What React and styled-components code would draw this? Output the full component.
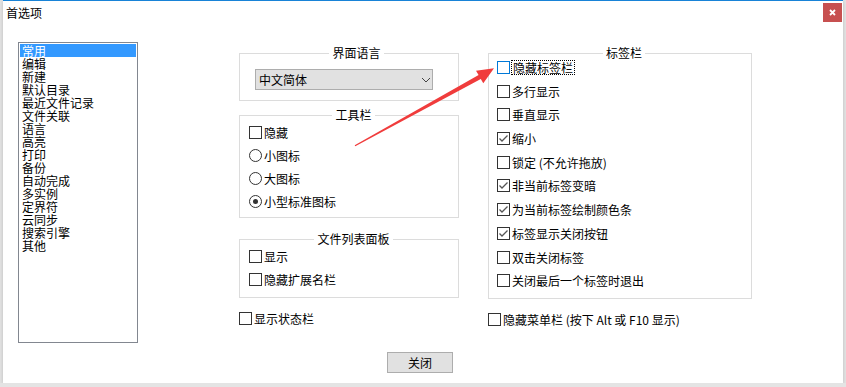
import React from 'react';
import styled, {createGlobalStyle} from 'styled-components';

const GlobalStyle = createGlobalStyle`
  body {
    margin: 0;
    background: #e4e4e4;
    font-family: "Noto Sans CJK SC", "Microsoft YaHei", sans-serif;
    font-size: 12px;
    color: #000;
  }
`;

const Window = styled.div`
  position: relative;
  box-sizing: border-box;
  width: 840px;
  height: 383px;
  margin-left: 3px;
  background: #fff;
  border-top: 1px solid #1883d7;
  box-shadow: 0 1px 4px rgba(0, 0, 0, 0.18);
`;

const TitleBar = styled.div`
  height: 41px;
  display: flex;
  justify-content: space-between;
  align-items: flex-start;
`;

const Title = styled.div`
  padding: 5px 0 0 3px;
  font-size: 12px;
  line-height: 14px;
`;

const CloseButton = styled.div`
  width: 19px;
  height: 19px;
  margin: 2px 1px 0 0;
  background: #c75050;
  display: flex;
  align-items: center;
  justify-content: center;
`;

const Main = styled.div`
  display: flex;
  align-items: flex-start;
  padding-left: 15px;
`;

const CategoryList = styled.div`
  box-sizing: border-box;
  width: 120px;
  height: 301px;
  border: 1px solid #828790;
  padding: 1px;
  display: flex;
  flex-direction: column;
`;

const CategoryItem = styled.div`
  height: 13px;
  line-height: 13px;
  padding-left: 2px;
  white-space: nowrap;
  background: ${p => (p.$selected ? '#3399ff' : 'transparent')};
  color: ${p => (p.$selected ? '#fff' : '#000')};
`;

const Column = styled.div`
  width: ${p => p.$width}px;
  margin-left: ${p => p.$ml}px;
  display: flex;
  flex-direction: column;
`;

const Group = styled.fieldset`
  box-sizing: border-box;
  min-width: 0;
  width: 100%;
  margin: ${p => p.$mt || 0}px 0 0 0;
  border: 1px solid #dcdcdc;
  padding: ${p => p.$pt}px 0 ${p => p.$pb}px ${p => p.$pl}px;
  display: flex;
  flex-direction: column;
  gap: ${p => p.$gap || 0}px;
`;

const Legend = styled.legend`
  margin: 0 auto;
  padding: 0 3px;
  font-size: 12px;
  line-height: 14px;
  height: 14px;
`;

const Select = styled.div`
  box-sizing: border-box;
  width: 178px;
  height: 21px;
  background: #e1e1e1;
  border: 1px solid #adadad;
  padding: 0 1px 0 3px;
  display: flex;
  align-items: center;
  justify-content: space-between;
`;

const OptionRow = styled.div`
  height: 13px;
  display: flex;
  align-items: center;
  gap: 2px;
  margin-top: ${p => p.$mt || 0}px;
`;

const Box = styled.span`
  box-sizing: border-box;
  flex: none;
  width: 13px;
  height: 13px;
  background: #fff;
  border: 1px solid ${p => (p.$focused ? '#0078d7' : '#333')};
  border-radius: ${p => (p.$round ? '50%' : '0')};
  display: flex;
  align-items: center;
  justify-content: center;
`;

const Dot = styled.span`
  width: 5px;
  height: 5px;
  border-radius: 50%;
  background: #333;
`;

const Label = styled.span`
  line-height: 13px;
  white-space: nowrap;
  outline: ${p => (p.$focused ? '1px dotted #000' : 'none')};
  outline-offset: 0;
  padding: ${p => (p.$focused ? '0 1px' : '0')};
`;

const Footer = styled.div`
  display: flex;
  justify-content: center;
  padding-right: 6px;
  margin-top: 9px;
`;

const Button = styled.div`
  box-sizing: border-box;
  width: 66px;
  height: 21px;
  background: #e1e1e1;
  border: 1px solid #adadad;
  display: flex;
  align-items: center;
  justify-content: center;
  line-height: 14px;
`;

const Overlay = styled.svg`
  position: absolute;
  left: 0;
  top: -1px;
  pointer-events: none;
`;

const Check = ({checked, focused, label, mt}) => (
    <OptionRow $mt={mt}>
        <Box $focused={focused}>
            {checked && (
                <svg width="11" height="11" viewBox="0 0 11 11">
                    <polyline points="1.5,5.5 4,8 9.5,2.5" fill="none" stroke="#555" strokeWidth="1.3"/>
                </svg>
            )}
        </Box>
        <Label $focused={focused}>{label}</Label>
    </OptionRow>
);

const Radio = ({checked, label}) => (
    <OptionRow>
        <Box $round>{checked && <Dot/>}</Box>
        <Label>{label}</Label>
    </OptionRow>
);

const categories = ['常用', '编辑', '新建', '默认目录', '最近文件记录', '文件关联', '语言', '高亮', '打印',
    '备份', '自动完成', '多实例', '定界符', '云同步', '搜索引擎', '其他'];

const tabOptions = [
    ['隐藏标签栏', false, true],
    ['多行显示', false],
    ['垂直显示', false],
    ['缩小', true],
    ['锁定 (不允许拖放)', false],
    ['非当前标签变暗', true],
    ['为当前标签绘制颜色条', true],
    ['标签显示关闭按钮', true],
    ['双击关闭标签', false],
    ['关闭最后一个标签时退出', false],
];

export default function App() {
    return (
        <>
            <GlobalStyle/>
            <Window>
                <TitleBar>
                    <Title>首选项</Title>
                    <CloseButton>
                        <svg width="19" height="19" viewBox="0 0 19 19">
                            <path d="M7 7 L12 12 M12 7 L7 12" stroke="#fff" strokeWidth="1.8"/>
                        </svg>
                    </CloseButton>
                </TitleBar>
                <Main>
                    <CategoryList>
                        {categories.map((c, i) => (
                            <CategoryItem key={c} $selected={i === 0}>{c}</CategoryItem>
                        ))}
                    </CategoryList>
                    <Column $width={220} $ml={101}>
                        <Group $mt={4} $pt={9} $pb={10} $pl={15}>
                            <Legend>界面语言</Legend>
                            <Select>
                                <span>中文简体</span>
                                <svg width="10" height="10" viewBox="0 0 10 10">
                                    <polyline points="1,3 5,7 9,3" fill="none" stroke="#444" strokeWidth="1"/>
                                </svg>
                            </Select>
                        </Group>
                        <Group $mt={7} $pt={4} $pb={9} $pl={9} $gap={10}>
                            <Legend>工具栏</Legend>
                            <Check label="隐藏"/>
                            <Radio label="小图标"/>
                            <Radio label="大图标"/>
                            <Radio label="小型标准图标" checked/>
                        </Group>
                        <Group $mt={14} $pt={4} $pb={11} $pl={9} $gap={10}>
                            <Legend>文件列表面板</Legend>
                            <Check label="显示"/>
                            <Check label="隐藏扩展名栏"/>
                        </Group>
                        <Check label="显示状态栏" mt={14}/>
                    </Column>
                    <Column $width={264} $ml={29}>
                        <Group $mt={4} $pt={1} $pb={10.7} $pl={8} $gap={10.7}>
                            <Legend>标签栏</Legend>
                            {tabOptions.map(([label, checked, focused]) => (
                                <Check key={label} label={label} checked={checked} focused={focused}/>
                            ))}
                        </Group>
                        <Check label="隐藏菜单栏 (按下 Alt 或 F10 显示)" mt={14}/>
                    </Column>
                </Main>
                <Footer>
                    <Button>关闭</Button>
                </Footer>
                <Overlay width="840" height="383" viewBox="3 0 840 383">
                    <polygon
                        points="494,68.3 476,70.7 478.6,75.1 354.7,145.2 355.3,146.2 480.8,78.9 483.3,83.3"
                        fill="#f03c3c"/>
                </Overlay>
            </Window>
        </>
    );
}
